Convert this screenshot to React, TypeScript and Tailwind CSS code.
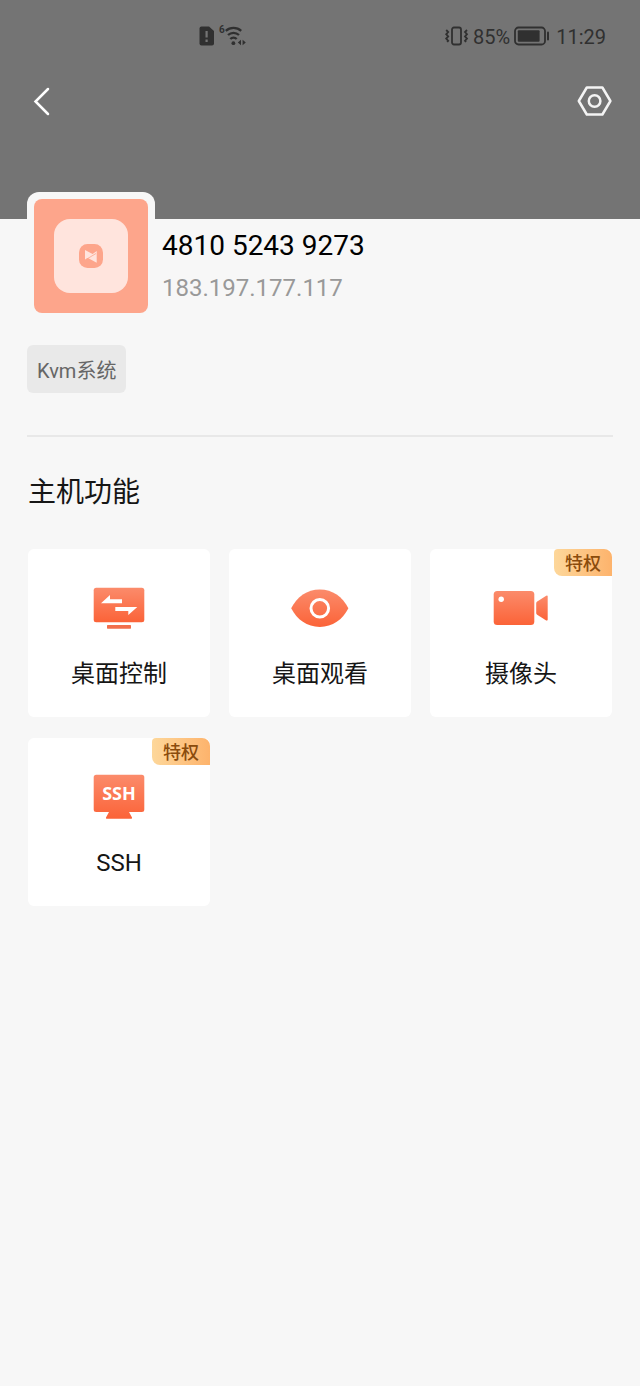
import React from 'react';
import type { ReactNode } from 'react';

const OrangeGradient = ({ id }: { id: string }) => (
  <defs>
    <linearGradient id={id} x1="0" y1="0" x2="0" y2="1">
      <stop offset="0" stopColor="#fb8b6b" />
      <stop offset="1" stopColor="#fb6338" />
    </linearGradient>
  </defs>
);

const ControlIcon = () => (
  <svg width="60" height="60" viewBox="0 0 60 60" aria-hidden="true">
    <OrangeGradient id="control" />
    <rect x="4.7" y="9.7" width="50.6" height="34.5" rx="2.5" fill="url(#control)" />
    <rect x="18" y="47" width="24" height="3.7" rx="0.6" fill="#f26f4c" />
    <path d="M12 25.3 21 17v4.3h12v4zM48.3 29l-9 8v-4h-13v-4z" fill="#fff" />
  </svg>
);

const EyeIcon = () => (
  <svg width="60" height="60" viewBox="0 0 60 60" aria-hidden="true">
    <OrangeGradient id="eye" />
    <path d="M1.2 30.3C7 19 17 11.6 29.8 11.6S52.6 19 58.4 30.3C52.6 41.6 42.6 49 29.8 49S7 41.6 1.2 30.3z" fill="url(#eye)" />
    <circle cx="29.8" cy="30.3" r="8.8" fill="none" stroke="#fff" strokeWidth="3" />
  </svg>
);

const CameraIcon = () => (
  <svg width="60" height="60" viewBox="0 0 60 60" aria-hidden="true">
    <OrangeGradient id="camera" />
    <rect x="2.7" y="13" width="40.6" height="34" rx="3.5" fill="url(#camera)" />
    <path d="M45.2 25.5q0-1.2 1-1.9l9-5.8q1.5-.7 1.5.8v23q0 1.5-1.5.8l-9-5.6q-1-.7-1-1.9z" fill="url(#camera)" />
    <circle cx="10.2" cy="21.2" r="2.7" fill="#fff" />
  </svg>
);

const SshIcon = () => (
  <svg width="60" height="60" viewBox="0 0 60 60" aria-hidden="true">
    <OrangeGradient id="ssh" />
    <path
      d="M7.2 7.7h45.6q2.5 0 2.5 2.5v32.4q0 2.5-2.5 2.5H40l3 5.4q.4 1.2-.8 1.2H17.8q-1.2 0-.8-1.2l3-5.4H7.2q-2.5 0-2.5-2.5V10.2q0-2.5 2.5-2.5z"
      fill="url(#ssh)"
    />
    <text x="30" y="33" textAnchor="middle" fontSize="18" fontWeight="700" fill="#fff" fontFamily="'Noto Sans', sans-serif">
      SSH
    </text>
  </svg>
);

const StatusBar = () => (
  <div className="flex h-[72px] items-center justify-between pl-[199px] pr-[34px] text-xl text-[#303030]">
    <div className="flex items-center gap-1">
      <svg width="15" height="22" viewBox="0 0 15 22" aria-hidden="true">
        <path d="M2.5 1.5H10L15 6v12.5q0 2-2 2H2.5q-2 0-2-2v-15q0-2 2-2z" fill="currentColor" />
        <path d="M7.6 6v6.5M7.6 14.5V17" stroke="#747474" strokeWidth="2.2" />
      </svg>
      <svg width="29" height="22" viewBox="0 0 29 22" fill="none" stroke="currentColor" aria-hidden="true">
        <text x="1" y="8" fontSize="10" fontWeight="700" fill="currentColor" stroke="none">6</text>
        <path d="M7.8 5.8a11.500 11.500 0 0 1 15.400 0M10 10a8 8 0 0 1 11 0M12.300 14a4.600 4.600 0 0 1 6.400 0" strokeWidth="2.3" />
        <circle cx="15.4" cy="18.2" r="1.9" fill="currentColor" stroke="none" />
        <path d="M23 14.8v5.400l-3.200-2.700zM24.600 14.800v5.400l3.200-2.700z" fill="currentColor" stroke="none" />
      </svg>
    </div>
    <div className="flex items-center">
      <svg className="mr-1" width="25" height="22" viewBox="0 0 25 22" fill="none" stroke="currentColor" aria-hidden="true">
        <rect x="8" y="2.5" width="9" height="17" rx="2" strokeWidth="1.8" />
        <path d="M2.200 5l2 2-2 2.200 2 2.200-2 2.200 2 2.200-1 1.200M23 5l-2 2 2 2.200-2 2.200 2 2.200-2 2.200 1 1.200" strokeWidth="1.8" />
      </svg>
      <span className="pt-0.5">85%</span>
      <svg className="ml-1 mr-1.5" width="36" height="22" viewBox="0 0 36 22" aria-hidden="true">
        <rect x="1" y="2.5" width="30" height="17" rx="3.5" fill="none" stroke="currentColor" strokeWidth="1.8" />
        <rect x="3.8" y="5.2" width="21.8" height="11.6" rx="1" fill="currentColor" />
        <rect x="33" y="6.5" width="2" height="9" rx="1" fill="currentColor" />
      </svg>
      <span className="pt-0.5">11:29</span>
    </div>
  </div>
);

interface Feature {
  label: string;
  icon: ReactNode;
  privileged?: boolean;
}

const FeatureCard = ({ label, icon, privileged }: Feature) => (
  <button type="button" className="relative flex h-[168px] flex-col items-center rounded-md bg-white pt-[29px]">
    {privileged && (
      <span className="absolute right-0 top-0 h-[27px] w-[58px] rounded-bl-lg rounded-tl-sm rounded-tr-lg bg-linear-to-r from-[#fdd79a] to-[#fdb36c] text-center text-lg font-medium leading-[29px] text-[#8a4b0c]">
        特权
      </span>
    )}
    {icon}
    <span className="mt-5 text-2xl leading-8 text-[#161616]">{label}</span>
  </button>
);

const App = () => {
  const features: Feature[] = [
    { label: '桌面控制', icon: <ControlIcon /> },
    { label: '桌面观看', icon: <EyeIcon /> },
    { label: '摄像头', icon: <CameraIcon />, privileged: true },
    { label: 'SSH', icon: <SshIcon />, privileged: true },
  ];

  return (
    <div className="min-h-screen bg-[#f7f7f7] font-['Roboto','Noto_Sans_CJK_SC',sans-serif]">
      <header className="bg-[#747474] pb-[89px]">
        <StatusBar />
        <nav className="flex h-[58px] items-center justify-between pl-[31px] pr-[27px]">
          <button type="button" aria-label="返回">
            <svg width="20" height="30" viewBox="0 0 20 30" fill="none" stroke="#fff" strokeWidth="2.5" strokeLinecap="round">
              <path d="M17 3 4.500 15.500 17 28" />
            </svg>
          </button>
          <button type="button" aria-label="设置">
            <svg width="36" height="32" viewBox="0 0 36 32" fill="none" stroke="#f4f4f4" strokeWidth="2.5" strokeLinejoin="round">
              <path d="M1.800 16 9.800 2.500h15.600L33.400 16l-8 13.500H9.800z" />
              <circle cx="17.6" cy="16" r="5.8" />
            </svg>
          </button>
        </nav>
      </header>

      <main className="px-[27px]">
        <div className="-mt-[27px] flex">
          <div className="rounded-xl bg-[#f7f7f7] p-[7px]">
            <div className="flex size-[114px] items-center justify-center rounded-lg bg-[#fda58b]">
              <div className="flex size-[74px] items-center justify-center rounded-2xl bg-[#ffe4dd]">
                <svg width="24" height="24" viewBox="0 0 24 24" aria-hidden="true">
                  <rect width="24" height="24" rx="8.5" fill="#fda58b" />
                  <path d="M6 6l9 4.700L6 15.500zM17.700 7v11.700L8.500 13.800z" fill="#ffe4dd" />
                  <path d="M7 15.500 17 9.500" stroke="#fda58b" strokeWidth="0.8" />
                </svg>
              </div>
            </div>
          </div>
          <div className="ml-[7px] pt-[38px]">
            <h1 className="text-[28px] leading-8 text-black">4810 5243 9273</h1>
            <p className="mt-2.5 text-2xl leading-8 text-[#999]">183.197.177.117</p>
          </div>
        </div>

        <div className="mt-[25px] flex">
          <span className="h-12 rounded-md bg-[#e9e9e9] px-2.5 text-xl leading-[52px] text-[#666]">Kvm系统</span>
        </div>

        <section className="mt-[42px] border-t-2 border-[#e8e8e8] px-px pt-9">
          <h2 className="text-[28px] leading-10 text-[#161616]">主机功能</h2>
          <div className="mt-9 grid grid-cols-3 gap-x-[19px] gap-y-[21px]">
            {features.map((feature) => (
              <FeatureCard key={feature.label} {...feature} />
            ))}
          </div>
        </section>
      </main>
    </div>
  );
};

export default App;
